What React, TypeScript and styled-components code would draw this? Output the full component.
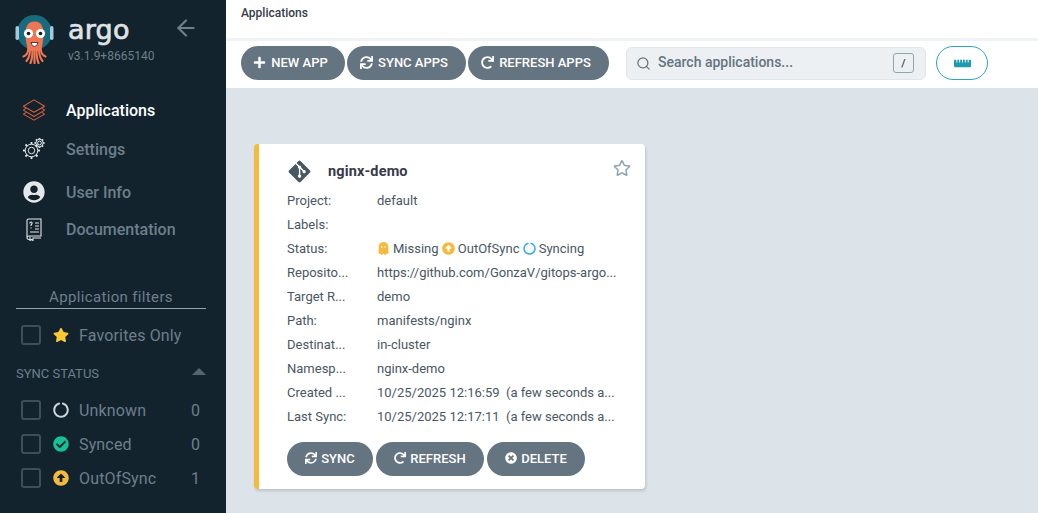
import { createGlobalStyle } from "styled-components";
import styled from "styled-components";
import {
  FaArrowAltCircleUp,
  FaCheckCircle,
  FaCircleNotch,
  FaGhost,
  FaGitAlt,
  FaPlus,
  FaRedo,
  FaRegStar,
  FaRulerHorizontal,
  FaStar,
  FaSync,
  FaTimesCircle,
  FaUserCircle,
} from "react-icons/fa";
import { ArrowLeft, Search as SearchIcon } from "lucide-react";
import type { ReactNode } from "react";

const GlobalStyle = createGlobalStyle`
  html, body {
    margin: 0;
    padding: 0;
    height: 100%;
    overflow: hidden;
    font-family: Roboto, "Liberation Sans", sans-serif;
    background: #dce3e9;
  }
  * { box-sizing: border-box; }
`;

const Page = styled.div`
  display: flex;
  width: 1038px;
  height: 513px;
  overflow: hidden;
`;

const Sidebar = styled.aside`
  width: 226px;
  flex: none;
  height: 513px;
  background: #13232e;
  overflow: hidden;
`;

const Brand = styled.div`
  display: flex;
  height: 66px;
  padding: 14px 0 0 15px;
`;

const BrandText = styled.div`
  display: flex;
  flex-direction: column;
  margin-left: 14px;
  width: 105px;
`;

const BrandName = styled.div`
  font-family: "DejaVu Sans", sans-serif;
  font-size: 27px;
  line-height: 26px;
  height: 31px;
  margin-top: 3px;
  letter-spacing: 0.2px;
  color: #dfe3e6;
  -webkit-text-stroke: 0.7px #dfe3e6;
`;

const Version = styled.div`
  font-size: 12px;
  line-height: 14px;
  margin-top: 1px;
  color: #6d7f8b;
`;

const Collapse = styled.div`
  display: flex;
  margin-top: 1px;
  color: #6d7f8b;
`;

const Nav = styled.nav`
  display: flex;
  flex-direction: column;
  margin-top: 34px;
`;

const NavItem = styled.div<{ $top: number; $active?: boolean }>`
  display: flex;
  align-items: center;
  height: 20px;
  margin-top: ${(p) => p.$top}px;
  padding-left: 22px;
  font-size: 16px;
  font-weight: 500;
  color: ${(p) => (p.$active ? "#fff" : "#6d7f8b")};
`;

const NavIcon = styled.span`
  display: flex;
  justify-content: center;
  align-items: center;
  width: 24px;
  height: 24px;
  margin-right: 20px;
  color: #e4e8ea;
`;

const Filters = styled.div`
  margin: 0 20px 0 16px;
`;

const FiltersTitle = styled.div`
  height: 22px;
  margin-top: 48px;
  font-size: 15px;
  line-height: 20px;
  text-align: center;
  letter-spacing: 0.35px;
  color: #6d7f8b;
  border-bottom: 1px solid #8fa4b1;
`;

const FilterRow = styled.div<{ $top: number }>`
  display: flex;
  align-items: center;
  height: 20px;
  margin-top: ${(p) => p.$top}px;
  padding-left: 5px;
  font-size: 16px;
  font-weight: 400;
  letter-spacing: 0.15px;
  color: #6d7f8b;
`;

const CheckBox = styled.span`
  flex: none;
  width: 20px;
  height: 20px;
  border: 2px solid #3f4e58;
  border-radius: 3px;
  margin-right: 12px;
`;

const FilterIcon = styled.span<{ $color: string }>`
  display: flex;
  justify-content: center;
  width: 16px;
  margin-right: 10px;
  font-size: 16px;
  color: ${(p) => p.$color};
`;

const Count = styled.span`
  margin-left: auto;
  width: 11px;
  margin-right: 5px;
  text-align: center;
`;

const SectionHead = styled.div`
  display: flex;
  align-items: center;
  justify-content: space-between;
  height: 18px;
  margin-top: 19px;
  margin-bottom: 18px;
  font-size: 13px;
  font-weight: 400;
  color: #6d7f8b;
`;

const Caret = styled.span`
  width: 0;
  height: 0;
  margin-bottom: 3px;
  border-left: 7px solid transparent;
  border-right: 7px solid transparent;
  border-bottom: 7px solid #56646e;
`;

const Main = styled.main`
  flex: 1;
  min-width: 0;
`;

const Header = styled.header`
  height: 41px;
  background: #fff;
  border-bottom: 3px solid #eff3f5;
  padding: 5px 0 0 15px;
  font-size: 12px;
  line-height: 16px;
  font-weight: 500;
  color: #363c4a;
`;

const Toolbar = styled.div`
  display: flex;
  align-items: center;
  height: 47px;
  padding: 0 0 3px 15px;
  background: #fff;
`;

const ActionGroup = styled.div<{ $gap: number }>`
  display: flex;
  gap: ${(p) => p.$gap}px;
`;

const Pill = styled.button<{ $width: number }>`
  display: flex;
  align-items: center;
  justify-content: center;
  gap: 4px;
  width: ${(p) => p.$width}px;
  height: 34px;
  padding: 0 0 2px;
  border: none;
  border-radius: 17px;
  background: #657481;
  color: #fff;
  font-family: inherit;
  font-size: 13px;
  font-weight: 500;
  svg { font-size: 12px; }
`;

const ToolbarPill = styled(Pill)`
  gap: 5px;
  padding-right: 5px;
  svg { font-size: 13px; }
`;

const Search = styled.div`
  display: flex;
  align-items: center;
  width: 300px;
  height: 33px;
  margin-left: 17px;
  padding: 0 11px 0 9px;
  background: #edf0f3;
  border: 1px solid #dee6eb;
  border-radius: 6px;
  color: #657481;
  font-size: 14px;
  font-weight: 500;
`;

const SearchLabel = styled.span`
  margin-left: 7px;
  margin-bottom: 2px;
  flex: 1;
`;

const KeyHint = styled.span`
  display: flex;
  align-items: center;
  justify-content: center;
  width: 21px;
  height: 20px;
  border: 1px solid #8fa4b1;
  border-radius: 3px;
  color: #363c4a;
  font-size: 11px;
`;

const RulerButton = styled.button`
  display: flex;
  align-items: center;
  justify-content: center;
  width: 52px;
  height: 34px;
  margin-left: 10px;
  padding: 0;
  background: #fff;
  border: 1px solid #2ba5bd;
  border-radius: 17px;
  color: #1f9bb0;
  font-size: 17px;
`;

const Content = styled.div`
  padding: 56px 0 0 28px;
`;

const Card = styled.article`
  width: 391px;
  height: 345px;
  padding: 15px 0 0 28px;
  background: #fff;
  border-left: 5px solid #f4ba3c;
  border-radius: 4px;
  box-shadow: 1px 2px 3px rgba(0, 0, 0, 0.14);
`;

const CardHead = styled.div`
  display: flex;
  align-items: center;
  height: 24px;
  padding-right: 14px;
`;

const GitIcon = styled.span`
  display: flex;
  width: 41px;
  font-size: 25px;
  color: #495763;
`;

const AppName = styled.span`
  flex: 1;
  font-size: 14.5px;
  font-weight: 700;
  letter-spacing: 0.15px;
  color: #363c4a;
`;

const StarButton = styled.span`
  display: flex;
  margin-top: -6px;
  color: #8fa4b1;
  font-size: 18px;
`;

const Rows = styled.div`
  margin-top: 5px;
`;

const Row = styled.div`
  display: flex;
  align-items: center;
  height: 24px;
  font-size: 13px;
  color: #495763;
`;

const RowLabel = styled.span`
  flex: none;
  width: 90px;
`;

const RowValue = styled.span`
  display: flex;
  align-items: center;
  width: 239px;
  white-space: pre;
`;

const StatusIcon = styled.span<{ $color: string; $gap: number }>`
  display: flex;
  margin: 0 ${(p) => p.$gap}px 0 0;
  font-size: 13px;
  color: ${(p) => p.$color};
`;

const CardActions = styled(ActionGroup)`
  margin-top: 14px;
`;

const StackIcon = () => (
  <svg width="26" height="26" viewBox="0 0 26 26" fill="none" stroke="#d8603f" strokeWidth="1.1" strokeLinejoin="round">
    <path d="M13 2 L24.5 9 L13 15.5 L1.5 9 Z" />
    <path d="M4.5 11 L1.5 13.2 L13 20 L24.5 13.2 L21.5 11" />
    <path d="M4.5 15.5 L1.5 17.5 L13 24 L24.5 17.5 L21.5 15.5" />
  </svg>
);

const Gear = ({ cx, cy, r }: { cx: number; cy: number; r: number }) => (
  <g>
    <circle cx={cx} cy={cy} r={r * 0.38} />
    <circle cx={cx} cy={cy} r={r * 0.74} />
    {[0, 45, 90, 135, 180, 225, 270, 315].map((a) => (
      <line
        key={a}
        x1={cx + Math.cos((a * Math.PI) / 180) * r * 0.74}
        y1={cy + Math.sin((a * Math.PI) / 180) * r * 0.74}
        x2={cx + Math.cos((a * Math.PI) / 180) * r}
        y2={cy + Math.sin((a * Math.PI) / 180) * r}
        strokeWidth="1.8"
      />
    ))}
  </g>
);

const GearsIcon = () => (
  <svg width="24" height="24" viewBox="0 0 24 24" fill="none" stroke="#e4e8ea" strokeWidth="1">
    <Gear cx={9.5} cy={13.5} r={8.5} />
    <Gear cx={17.5} cy={6} r={5} />
  </svg>
);

const BookIcon = () => (
  <svg width="18" height="23" viewBox="0 0 18 23" fill="none" stroke="#e4e8ea" strokeWidth="1.1">
    <path d="M2 19 V2.5 Q2 1 3.5 1 H16 V18 H4 Q2 18 2 20 Q2 21.5 4 21.5 H5" />
    <path d="M5 18.5 V22.5 L6.5 21.5 L8 22.5 V20 H16" />
    <path d="M10 5 H14 M10 8 H14 M10 11 H14 M5 14 H14" />
    <path d="M4.8 5.5 Q5 4 6 4 Q7.3 4 7 5.5 Q6.6 6.5 6 7 V8 M6 9.5 V10.5" />
  </svg>
);

const ArgoLogo = () => (
  <svg width="39" height="50" viewBox="0 0 39 50">
    <circle cx="19.5" cy="18.5" r="17.5" fill="#176b7c" />
    <rect x="0.5" y="12" width="3.5" height="14" rx="1.7" fill="#a4c8dc" />
    <rect x="35" y="12" width="3.5" height="14" rx="1.7" fill="#a4c8dc" />
    <path d="M19.5 7.5 C12.5 7.5 10.5 13 10.5 20 C10.5 27 12 32 13 37 H26 C27 32 28.5 27 28.5 20 C28.5 13 26.5 7.5 19.5 7.5 Z" fill="#ee7654" />
    <g fill="none" stroke="#ee7654" strokeWidth="2.2" strokeLinecap="round">
      <path d="M13.5 34 Q13 41 8.5 42.5" />
      <path d="M15 35 Q15 43 11.5 47" />
      <path d="M17.5 36 Q17.5 44 15.5 49" />
      <path d="M19.5 36 V49" />
      <path d="M21.5 36 Q21.5 44 23.5 49" />
      <path d="M24 35 Q24 43 27.5 47" />
      <path d="M25.5 34 Q26 41 30.5 42.5" />
    </g>
    <circle cx="13.5" cy="19.5" r="4.6" fill="#fff" />
    <circle cx="25.5" cy="19.5" r="4.6" fill="#fff" />
    <circle cx="13.5" cy="19.5" r="1.8" fill="#1a1a1a" />
    <circle cx="25.5" cy="19.5" r="1.8" fill="#1a1a1a" />
    <path d="M16 28.5 H23 Q22.2 32.5 19.5 32.5 Q16.8 32.5 16 28.5 Z" fill="#fff" stroke="#3a1a12" strokeWidth="0.8" />
  </svg>
);

interface Detail {
  label: string;
  value: ReactNode;
}

const details: Detail[] = [
  { label: "Project:", value: "default" },
  { label: "Labels:", value: "" },
  {
    label: "Status:",
    value: (
      <>
        <StatusIcon $color="#f4ba3c" $gap={3}>
          <FaGhost />
        </StatusIcon>
        {"Missing "}
        <StatusIcon $color="#f4ba3c" $gap={3}>
          <FaArrowAltCircleUp />
        </StatusIcon>
        {"OutOfSync "}
        <StatusIcon $color="#3fb0e8" $gap={3}>
          <FaCircleNotch />
        </StatusIcon>
        Syncing
      </>
    ),
  },
  { label: "Reposito...", value: "https://github.com/GonzaV/gitops-argo..." },
  { label: "Target R...", value: "demo" },
  { label: "Path:", value: "manifests/nginx" },
  { label: "Destinat...", value: "in-cluster" },
  { label: "Namesp...", value: "nginx-demo" },
  { label: "Created ...", value: "10/25/2025 12:16:59  (a few seconds a..." },
  { label: "Last Sync:", value: "10/25/2025 12:17:11  (a few seconds a..." },
];

export default function App() {
  return (
    <Page>
      <GlobalStyle />
      <Sidebar>
        <Brand>
          <ArgoLogo />
          <BrandText>
            <BrandName>argo</BrandName>
            <Version>v3.1.9+8665140</Version>
          </BrandText>
          <Collapse>
            <ArrowLeft size={26} strokeWidth={2} />
          </Collapse>
        </Brand>
        <Nav>
          <NavItem $top={0} $active>
            <NavIcon>
              <StackIcon />
            </NavIcon>
            Applications
          </NavItem>
          <NavItem $top={19}>
            <NavIcon>
              <GearsIcon />
            </NavIcon>
            Settings
          </NavItem>
          <NavItem $top={23}>
            <NavIcon>
              <FaUserCircle size={22} />
            </NavIcon>
            User Info
          </NavItem>
          <NavItem $top={17}>
            <NavIcon>
              <BookIcon />
            </NavIcon>
            Documentation
          </NavItem>
        </Nav>
        <Filters>
          <FiltersTitle>Application filters</FiltersTitle>
          <FilterRow $top={16}>
            <CheckBox />
            <FilterIcon $color="#fcc934">
              <FaStar />
            </FilterIcon>
            Favorites Only
          </FilterRow>
          <SectionHead>
            SYNC STATUS
            <Caret />
          </SectionHead>
          <FilterRow $top={0}>
            <CheckBox />
            <FilterIcon $color="#ccd6dd">
              <FaCircleNotch />
            </FilterIcon>
            Unknown
            <Count>0</Count>
          </FilterRow>
          <FilterRow $top={14}>
            <CheckBox />
            <FilterIcon $color="#18be94">
              <FaCheckCircle />
            </FilterIcon>
            Synced
            <Count>0</Count>
          </FilterRow>
          <FilterRow $top={14}>
            <CheckBox />
            <FilterIcon $color="#f4ba3c">
              <FaArrowAltCircleUp />
            </FilterIcon>
            OutOfSync
            <Count>1</Count>
          </FilterRow>
        </Filters>
      </Sidebar>
      <Main>
        <Header>Applications</Header>
        <Toolbar>
          <ActionGroup $gap={2}>
            <ToolbarPill $width={104}>
              <FaPlus /> NEW APP
            </ToolbarPill>
            <ToolbarPill $width={119}>
              <FaSync /> SYNC APPS
            </ToolbarPill>
            <ToolbarPill $width={141}>
              <FaRedo /> REFRESH APPS
            </ToolbarPill>
          </ActionGroup>
          <Search>
            <SearchIcon size={15} strokeWidth={2} />
            <SearchLabel>Search applications...</SearchLabel>
            <KeyHint>/</KeyHint>
          </Search>
          <RulerButton aria-label="Summary">
            <FaRulerHorizontal />
          </RulerButton>
        </Toolbar>
        <Content>
          <Card>
            <CardHead>
              <GitIcon>
                <FaGitAlt />
              </GitIcon>
              <AppName>nginx-demo</AppName>
              <StarButton>
                <FaRegStar />
              </StarButton>
            </CardHead>
            <Rows>
              {details.map((d) => (
                <Row key={d.label}>
                  <RowLabel>{d.label}</RowLabel>
                  <RowValue>{d.value}</RowValue>
                </Row>
              ))}
            </Rows>
            <CardActions $gap={3}>
              <Pill $width={86}>
                <FaSync /> SYNC
              </Pill>
              <Pill $width={108}>
                <FaRedo /> REFRESH
              </Pill>
              <Pill $width={98}>
                <FaTimesCircle /> DELETE
              </Pill>
            </CardActions>
          </Card>
        </Content>
      </Main>
    </Page>
  );
}
